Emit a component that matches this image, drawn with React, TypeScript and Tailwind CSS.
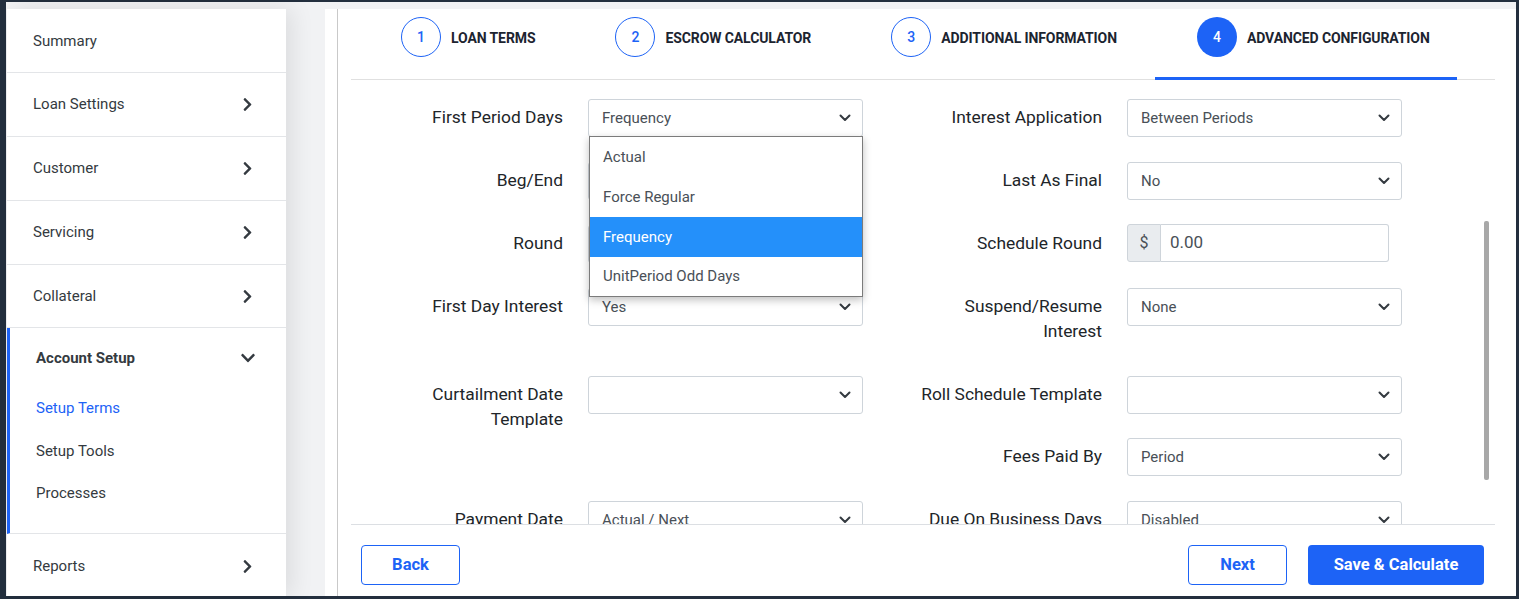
import { FaChevronRight, FaChevronDown } from "react-icons/fa";

function Caret() {
  return (
    <svg width="12" height="8" viewBox="0 0 12 8" className="shrink-0">
      <path d="M1.5 1.5l4.5 4.5 4.5-4.5" fill="none" stroke="#343a40" strokeWidth="2" strokeLinecap="round" strokeLinejoin="round" />
    </svg>
  );
}

function Select({ value, width = "w-[275px]" }: { value?: string; width?: string }) {
  return (
    <div className={`flex h-[38px] ${width} items-center justify-between rounded-[3px] border border-[#ced4da] bg-white pl-[13px] pr-[11px] text-[15px] text-[#495057]`}>
      <span>{value}</span>
      <Caret />
    </div>
  );
}

function Label({ children }: { children: React.ReactNode }) {
  return <div className="pt-[6px] text-right text-[17.4px] leading-[25px] text-[#212529]">{children}</div>;
}

const sidebar = ["Loan Settings", "Customer", "Servicing", "Collateral"];

export default function App() {
  return (
    <div className="h-[599px] w-[1519px] overflow-hidden bg-[#232f3e] pb-[3px] pl-[6px] pr-[3px] pt-[2px] font-['Roboto',sans-serif]">
      <div className="flex h-full bg-[#f1f2f4] pl-[1px] pt-[7px]">
        {/* sidebar */}
        <aside className="flex w-[279px] shrink-0 flex-col bg-white shadow-[6px_0_22px_rgba(0,0,0,0.09)]">
          <div className="flex h-[64px] items-center border-b border-[#e3e5e8] pl-[26px] pt-[2px] text-[15px] text-[#343a40]">Summary</div>
          {sidebar.map((s) => (
            <div key={s} className="flex h-[64px] items-center justify-between border-b border-[#e3e5e8] pl-[26px] pr-[31px] text-[15px] text-[#343a40]">
              <span>{s}</span>
              <FaChevronRight className="text-[15px] text-[#343a40]" />
            </div>
          ))}
          <div className="flex h-[206px] flex-col border-b border-[#e3e5e8] border-l-[3px] border-l-[#1d63f6] pl-[26px] pr-[30px]">
            <div className="flex h-[60px] items-center justify-between">
              <span className="text-[15px] font-bold text-[#343a40]">Account Setup</span>
              <FaChevronDown className="text-[16px] text-[#343a40]" />
            </div>
            <div className="mt-[9px] text-[15px] text-[#1d63f6]">Setup Terms</div>
            <div className="mt-[20px] text-[15px] text-[#343a40]">Setup Tools</div>
            <div className="mt-[20px] text-[15px] text-[#343a40]">Processes</div>
          </div>
          <div className="flex h-[62px] items-center justify-between pl-[26px] pr-[31px] pt-[2px] text-[15px] text-[#343a40]">
            <span>Reports</span>
            <FaChevronRight className="text-[15px] text-[#343a40]" />
          </div>
        </aside>

        {/* main panel */}
        <main className="ml-[39px] flex flex-1 bg-white pl-[12px]">
          <div className="flex flex-1 flex-col border-l border-[#c9c9c9] pl-[13px] pr-[21px]">
            {/* tabs */}
            <div className="flex h-[71px] shrink-0 border-b border-[#e0e0e0] pl-[10px]">
              {[
                ["1", "LOAN TERMS"],
                ["2", "ESCROW CALCULATOR"],
                ["3", "ADDITIONAL INFORMATION"],
                ["4", "ADVANCED CONFIGURATION"],
              ].map(([n, t], i) => {
                const active = i === 3;
                return (
                  <div key={n} className="relative flex items-start px-[40px] pt-[8px]">
                    <div
                      className={
                        active
                          ? "flex h-[40px] w-[40px] items-center justify-center rounded-full bg-[#1d63f6] text-[14px] font-medium text-white"
                          : "flex h-[40px] w-[40px] items-center justify-center rounded-full border border-[#1d63f6] text-[14px] font-medium text-[#1d63f6]"
                      }
                    >
                      {n}
                    </div>
                    <div className="ml-[10px] mt-[1px] flex h-[40px] items-center text-[14px] font-bold tracking-[-0.1px] text-[#1c2430]">{t}</div>
                    {active && <span className="absolute bottom-[-1px] left-[-2px] right-[13px] h-[3px] bg-[#1d63f6]" />}
                  </div>
                );
              })}
            </div>

            {/* form */}
            <div className="relative flex-1 overflow-hidden pt-[19px]">
              <div className="flex h-[63px]">
                <div className="w-[212px]"><Label>First Period Days</Label></div>
                <div className="relative ml-[25px]">
                  <Select value="Frequency" />
                  <div className="absolute left-[1px] top-[37px] z-10 w-[274px] border border-[#7b7b7b] bg-white text-[15px] text-[#495057] shadow-[0_3px_8px_rgba(0,0,0,0.25)]">
                    <div className="flex h-[40px] items-center px-[13px]">Actual</div>
                    <div className="flex h-[40px] items-center px-[13px]">Force Regular</div>
                    <div className="flex h-[40px] items-center bg-[#2490fa] px-[13px] text-white">Frequency</div>
                    <div className="flex h-[39px] items-center px-[13px]">UnitPeriod Odd Days</div>
                  </div>
                </div>
                <div className="w-[239px]"><Label>Interest Application</Label></div>
                <div className="ml-[25px]"><Select value="Between Periods" /></div>
              </div>

              <div className="flex h-[63px]">
                <div className="w-[212px]"><Label>Beg/End</Label></div>
                <div className="ml-[25px]"><Select value="End" /></div>
                <div className="w-[239px]"><Label>Last As Final</Label></div>
                <div className="ml-[25px]"><Select value="No" /></div>
              </div>

              <div className="flex h-[63px]">
                <div className="w-[212px]"><Label>Round</Label></div>
                <div className="ml-[25px]"><Select value="" /></div>
                <div className="w-[239px]"><Label>Schedule Round</Label></div>
                <div className="ml-[25px] mt-[-1px] flex h-[38px] w-[262px]">
                  <div className="flex w-[34px] items-center justify-center rounded-l-[3px] border border-[#ced4da] bg-[#e9ecef] text-[16px] text-[#495057]">$</div>
                  <div className="flex flex-1 items-center rounded-r-[3px] border border-l-0 border-[#ced4da] pl-[9px] text-[17px] text-[#495057]">0.00</div>
                </div>
              </div>

              <div className="flex h-[88px]">
                <div className="w-[212px]"><Label>First Day Interest</Label></div>
                <div className="ml-[25px]"><Select value="Yes" /></div>
                <div className="w-[239px]"><Label>Suspend/Resume<br />Interest</Label></div>
                <div className="ml-[25px]"><Select value="None" /></div>
              </div>

              <div className="flex h-[62px]">
                <div className="w-[212px]"><Label>Curtailment Date<br />Template</Label></div>
                <div className="ml-[25px]"><Select value="" /></div>
                <div className="w-[239px]"><Label>Roll Schedule Template</Label></div>
                <div className="ml-[25px]"><Select value="" /></div>
              </div>

              <div className="flex h-[63px]">
                <div className="w-[212px]" />
                <div className="ml-[25px] w-[275px]" />
                <div className="w-[239px]"><Label>Fees Paid By</Label></div>
                <div className="ml-[25px]"><Select value="Period" /></div>
              </div>

              <div className="flex h-[63px]">
                <div className="w-[212px]"><Label>Payment Date</Label></div>
                <div className="ml-[25px]"><Select value="Actual / Next" /></div>
                <div className="w-[239px]"><Label>Due On Business Days</Label></div>
                <div className="ml-[25px]"><Select value="Disabled" /></div>
              </div>

              <div className="absolute right-[6px] top-[141px] h-[259px] w-[5px] rounded-[2px] bg-[#a8a8a8]" />
            </div>

            {/* footer */}
            <div className="flex h-[72px] shrink-0 items-start justify-between border-t border-[#dcdfe3] pl-[10px] pr-[11px] pt-[20px]">
              <button className="h-[40px] w-[99px] rounded-[4px] border border-[#1d63f6] bg-white text-[16.5px] font-bold text-[#1d63f6]">Back</button>
              <div className="flex gap-[21px]">
                <button className="h-[40px] w-[99px] rounded-[4px] border border-[#1d63f6] bg-white text-[16.5px] font-bold text-[#1d63f6]">Next</button>
                <button className="h-[40px] w-[176px] rounded-[4px] bg-[#1d63f6] text-[16.5px] font-bold text-white">Save &amp; Calculate</button>
              </div>
            </div>
          </div>
        </main>
      </div>
    </div>
  );
}
